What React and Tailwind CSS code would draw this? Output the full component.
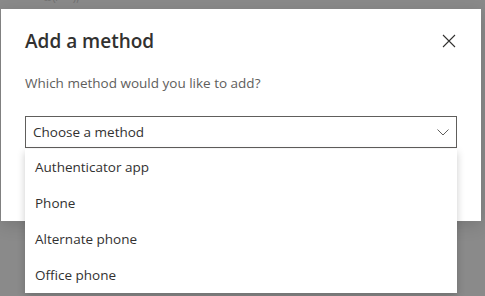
import React from "react"

const options = ["Authenticator app", "Phone", "Alternate phone", "Office phone"]

export default function App() {
  return (
    <div className="relative w-[485px] h-[296px] overflow-hidden bg-[#8a8a8a] font-['Open_Sans',sans-serif]">
      <div className="h-[9px] overflow-hidden pl-[43px]">
        <div className="-mt-[10px] text-[12px] leading-[14px] text-[#707070]">ω(/&nbsp;&nbsp;&nbsp;&nbsp;),+</div>
      </div>

      <div className="ml-[1px] w-[480px] h-[212px] bg-white shadow-[0_4px_16px_rgba(0,0,0,0.15)]">
        <div className="flex items-center justify-between pl-6 pr-[25px] pt-[18px]">
          <h2 className="text-[19px] leading-[28px] font-semibold text-[#323130]">Add a method</h2>
          <button className="w-[14px] h-[14px] text-[#323130]">
            <svg viewBox="0 0 14 14" width="14" height="14" fill="none" stroke="currentColor" strokeWidth="1.1">
              <path d="M1 1 L13 13 M13 1 L1 13" />
            </svg>
          </button>
        </div>

        <p className="px-6 mt-[18px] text-[13.5px] leading-[20px] text-[#605e5c]">
          Which method would you like to add?
        </p>

        <div className="relative mx-6 mt-[23px]">
          <div className="flex items-center justify-between h-[32px] border border-[#605e5c] pl-[7px] pr-[7px]">
            <span className="text-[13.5px] text-[#323130]">Choose a method</span>
            <svg viewBox="0 0 12 7" width="12" height="7" fill="none" stroke="#605e5c" strokeWidth="1">
              <path d="M0.5 0.5 L6 6 L11.5 0.5" />
            </svg>
          </div>

          <div className="absolute left-0 right-0 top-full mt-[1px] bg-white shadow-[0_3px_8px_rgba(0,0,0,0.2)] z-10">
            {options.map(o => (
              <div key={o} className="h-[36px] flex items-center pl-[10px] text-[13.5px] text-[#323130]">
                {o}
              </div>
            ))}
          </div>
        </div>
      </div>
    </div>
  )
}
